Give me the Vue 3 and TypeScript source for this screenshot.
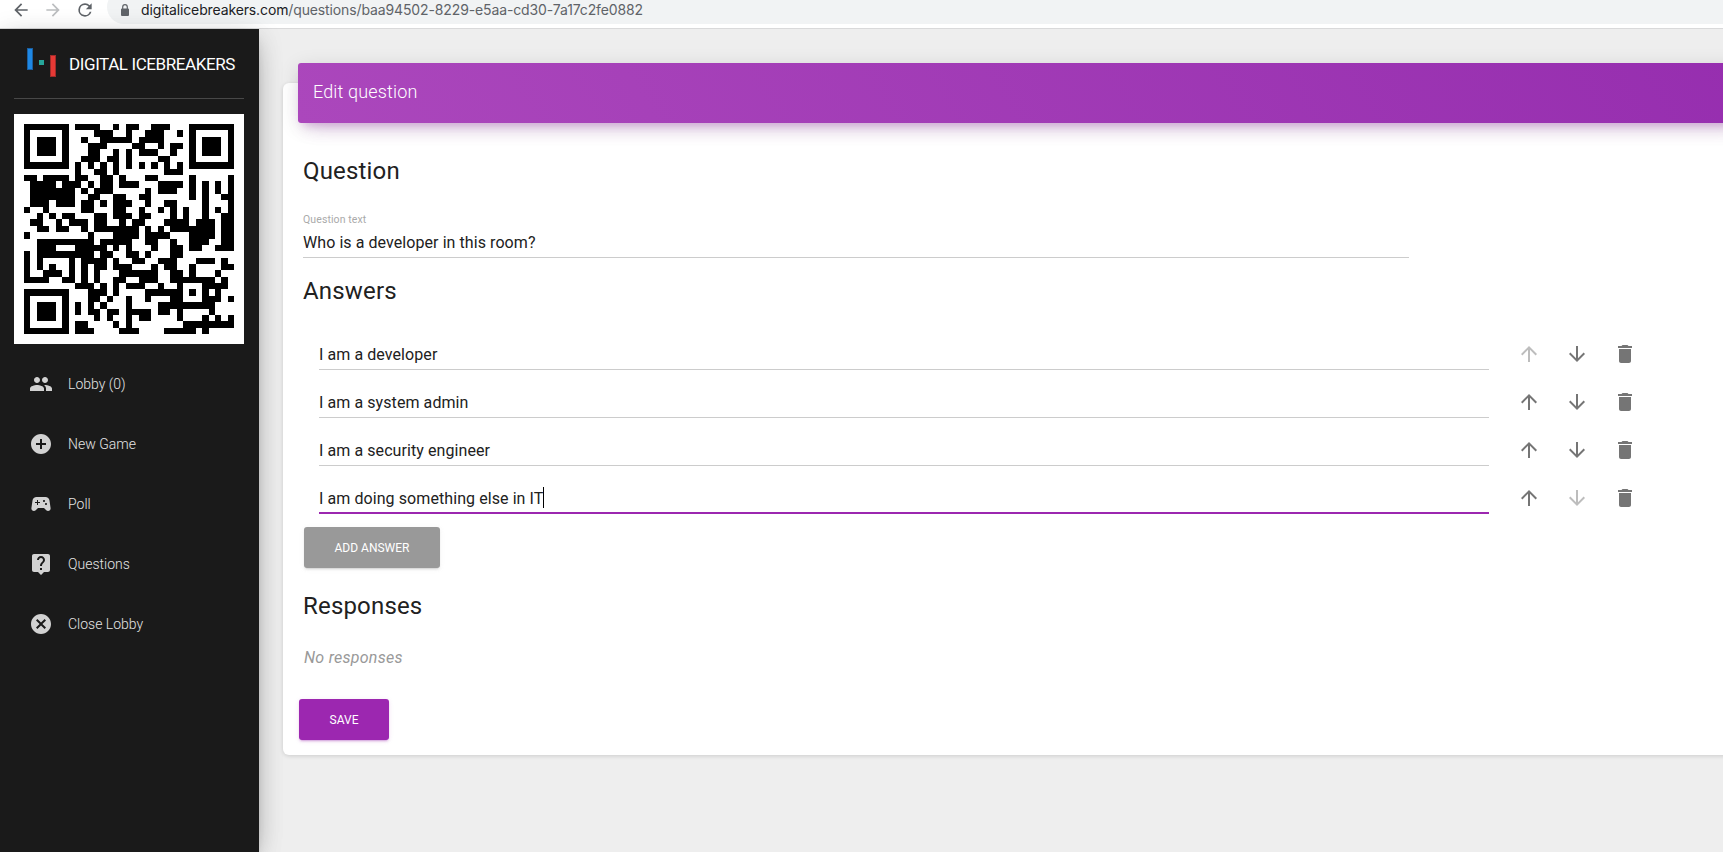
<script setup lang="ts">
const menu = [
  { label: 'Lobby (0)', d: 'M16 11c1.66 0 2.99-1.34 2.99-3S17.66 5 16 5s-3 1.34-3 3 1.34 3 3 3zm-8 0c1.66 0 2.99-1.34 2.99-3S9.66 5 8 5 5 6.34 5 8s1.34 3 3 3zm0 2c-2.33 0-7 1.17-7 3.5V19h14v-2.5C15 14.17 10.33 13 8 13zm8 0c-.29 0-.62.02-.97.05 1.16.84 1.97 1.97 1.97 3.45V19h6v-2.5c0-2.33-4.67-3.5-7-3.5z' },
  { label: 'New Game', d: 'M12 2C6.48 2 2 6.48 2 12s4.48 10 10 10 10-4.48 10-10S17.52 2 12 2zm5 11h-4v4h-2v-4H7v-2h4V7h2v4h4v2z' },
  { label: 'Poll', d: 'M21.58 16.09l-1.09-7.66C20.21 6.46 18.52 5 16.53 5H7.47C5.48 5 3.79 6.46 3.51 8.43l-1.09 7.66C2.2 17.63 3.39 19 4.94 19c.68 0 1.32-.27 1.8-.75L9 16h6l2.25 2.25c.48.48 1.13.75 1.8.75 1.56 0 2.75-1.37 2.53-2.91zM11 11H9v2H8v-2H6v-1h2V8h1v2h2v1zm4-1c-.55 0-1-.45-1-1s.45-1 1-1 1 .45 1 1-.45 1-1 1zm2 3c-.55 0-1-.45-1-1s.45-1 1-1 1 .45 1 1-.45 1-1 1z' },
  { label: 'Questions', d: 'M19 2H5c-1.11 0-2 .9-2 2v14c0 1.1.89 2 2 2h4l3 3 3-3h4c1.1 0 2-.9 2-2V4c0-1.1-.9-2-2-2zm-6 16h-2v-2h2v2zm2.07-7.75l-.9.92C13.45 11.9 13 12.5 13 14h-2v-.5c0-1.1.45-2.1 1.17-2.83l1.24-1.26c.37-.36.59-.86.59-1.41 0-1.1-.9-2-2-2s-2 .9-2 2H8c0-2.21 1.79-4 4-4s4 1.79 4 4c0 .88-.36 1.68-.93 2.25z' },
  { label: 'Close Lobby', d: 'M12 2C6.47 2 2 6.47 2 12s4.47 10 10 10 10-4.47 10-10S17.53 2 12 2zm5 13.59L15.59 17 12 13.41 8.41 17 7 15.59 10.59 12 7 8.41 8.41 7 12 10.59 15.59 7 17 8.41 13.41 12 17 15.59z' },
]
const up = 'M4 12l1.41 1.41L11 7.83V20h2V7.83l5.58 5.59L20 12l-8-8-8 8z'
const down = 'M20 12l-1.41-1.41L13 16.17V4h-2v12.17l-5.58-5.59L4 12l8 8 8-8z'
const bin = 'M6 19c0 1.1.9 2 2 2h8c1.1 0 2-.9 2-2V7H6v12zM19 4h-3.5l-1-1h-5l-1 1H5v2h14V4z'
const answers = ['I am a developer', 'I am a system admin', 'I am a security engineer', 'I am doing something else in IT']

// one string per module row, # = dark
const qr = [
  '#######.####..#.##..###...#######',
  '#.....#....###..#..###..#.#.....#',
  '#.###.#..#..#####.####....#.###.#',
  '#.###.#...###....##..#.##.#.###.#',
  '#.###.#...##..#.#.###..#..#.###.#',
  '#.....#..###.##.#....##...#.....#',
  '#######.#.#.#.#.#.#.#.#.#.#######',
  '........#..##.#.......###........',
  '##.####.##..##.#...##.....#.....#',
  '.####.###.#.##.###...####.#.#.#.#',
  '.#######.#.###.....#.###..#.#.#.#',
  '.#######..##..##..##......#.#..##',
  '.###.###.##.#.###..#..##....#...#',
  '#..#.....##...##..#..#.#.#..#.#.#',
  '..#.#.##...##.###.##...#.#..#..##',
  '.##..#.###.##..#.##...####.###.##',
  '..##.##..#.#######.#.#.#######.##',
  '#.........#...####.####...####.##',
  '..#########.#####..##..#..###..##',
  '..###...#####.#.#...#..##.##..###',
  '#.#########.##..##.#...##........',
  '#.#....#.####.#..##..###...###.#.',
  '#.#.#..#.#.##.###...#.##..#....##',
  '#..###.#.#.#...######..##.#...#..',
  '####..##.#.#..##..###..#######.#.',
  '........###.#.#.###..#..#...####.',
  '#######...###.#....######.#.#.#..',
  '#.....#...##.#..#..#...##...###.#',
  '#.###.#.#.#.#...#....#########...',
  '#.###.#.#.##.##.####.##.#....#...',
  '#.###.#....#.#..#.##....#...#.#.#',
  '#.....#.##....#.#........########',
  '#######.###....###....#####.#....',
]
const qrPath = qr.map((row, y) => [...row].map((c, x) => (c === '#' ? `M${x} ${y}h1v1h-1z` : '')).join('')).join('')
</script>

<template>
  <div class="window">
    <div class="toolbar">
      <svg class="nav" viewBox="0 0 24 24"><path d="M20 11H7.83l5.59-5.59L12 4l-8 8 8 8 1.41-1.41L7.83 13H20v-2z" /></svg>
      <svg class="nav off" viewBox="0 0 24 24"><path d="M12 4l-1.41 1.41L16.17 11H4v2h12.17l-5.58 5.59L12 20l8-8z" /></svg>
      <svg class="nav" viewBox="0 0 24 24"><path d="M17.65 6.35A7.958 7.958 0 0 0 12 4a8 8 0 1 0 7.73 10h-2.08A6 6 0 1 1 12 6c1.66 0 3.14.69 4.22 1.78L13 11h7V4l-2.35 2.35z" /></svg>
      <div class="address">
        <svg class="lock" viewBox="0 0 8 12"><path d="M0 5.5a1 1 0 0 1 1-1h6a1 1 0 0 1 1 1V11a1 1 0 0 1-1 1H1a1 1 0 0 1-1-1z" /><path d="M1.7 5V2.9a2.3 2.3 0 0 1 4.6 0V5" fill="none" stroke="#5f6368" stroke-width="1.2" /></svg>
        <span class="url"><b>digitalicebreakers.com</b>/questions/baa94502-8229-e5aa-cd30-7a17c2fe0882</span>
      </div>
    </div>
    <div class="page">
      <aside class="sidebar">
        <div class="brand">
          <svg class="logo" viewBox="0 0 30 30">
            <rect x=".5" y=".5" width="5" height="21" fill="#1e88e5" stroke="#1b5fa0" />
            <rect x="12" y="12" width="5" height="5" fill="#26a69a" />
            <rect x="23.5" y="7.5" width="5" height="21" fill="#e53935" stroke="#a02c2a" />
          </svg>
          <span>DIGITAL ICEBREAKERS</span>
        </div>
        <div class="code">
          <svg viewBox="0 0 33 33" shape-rendering="crispEdges"><path :d="qrPath" /></svg>
        </div>
        <nav>
          <a v-for="m in menu" :key="m.label" class="item">
            <svg viewBox="0 0 24 24"><path :d="m.d" /></svg><span>{{ m.label }}</span>
          </a>
        </nav>
      </aside>
      <main>
        <section class="card">
          <header>Edit question</header>
          <h3 class="first">Question</h3>
          <div class="field">
            <label>Question text</label>
            <div class="value">Who is a developer in this room?</div>
          </div>
          <h3 class="second">Answers</h3>
          <div class="answers">
            <div v-for="(a, i) in answers" :key="a" class="row">
              <div class="input" :class="{ focus: i === 3 }"><span>{{ a }}</span><i v-if="i === 3" class="caret" /></div>
              <svg viewBox="0 0 24 24" :class="{ disabled: i === 0 }"><path :d="up" /></svg>
              <svg viewBox="0 0 24 24" :class="{ disabled: i === 3 }"><path :d="down" /></svg>
              <svg viewBox="0 0 24 24"><path :d="bin" /></svg>
            </div>
          </div>
          <button class="add">ADD ANSWER</button>
          <h3 class="third">Responses</h3>
          <p class="none">No responses</p>
          <button class="save">SAVE</button>
        </section>
      </main>
    </div>
  </div>
</template>

<style>
body { margin: 0; overflow: hidden; }
</style>

<style scoped>
.window { width: 100vw; height: 100vh; overflow: hidden; display: flex; flex-direction: column; font-family: Roboto, sans-serif; color: #212121; }
.toolbar { height: 28px; flex: none; display: flex; background: #fff; border-bottom: 1px solid #d9d9da; overflow: hidden; }
.nav { width: 20px; height: 20px; flex: none; margin: 0 0 0 11px; fill: #5f6368; }
.nav + .nav { margin-left: 12px; }
.nav.off { fill: #bcbec0; }
.address { flex: 1; height: 34px; margin: -10px -20px 0 12px; border-radius: 17px; background: #f1f3f4; display: flex; align-items: center; padding: 6px 0 0 14px; box-sizing: border-box; }
.lock { width: 8px; height: 12px; fill: #5f6368; flex: none; margin-top: -1px; }
.url { font: 14px/20px Inter, sans-serif; letter-spacing: -.125px; color: #5f6368; margin-left: 12px; white-space: nowrap; }
.url b { font-weight: 400; color: #202124; }
.page { flex: 1; min-height: 0; display: flex; background: #eee; }
.sidebar { width: 259px; flex: none; box-sizing: border-box; padding: 0 15px 0 14px; background: #1a1a1a; box-shadow: 0 10px 30px -12px rgba(0,0,0,.42), 0 4px 25px rgba(0,0,0,.12), 0 8px 10px -5px rgba(0,0,0,.2); z-index: 1; }
.brand { height: 69px; display: flex; border-bottom: 1px solid #484848; color: #fff; font-size: 17px; line-height: 30px; letter-spacing: -.41px; white-space: nowrap; }
.logo { width: 30px; height: 30px; margin: 19px 12px 0 13px; }
.brand span { margin-top: 20px; }
.code { margin-top: 15px; height: 230px; background: #fff; padding: 10px; box-sizing: border-box; }
.code svg { display: block; width: 210px; height: 210px; }
nav { padding-top: 10px; }
.item { height: 60px; display: flex; align-items: center; padding-left: 15px; font-size: 14px; font-weight: 300; color: #e4e4e4; }
.item svg { width: 24px; height: 24px; fill: #d2d2d2; margin-right: 15px; }
main { flex: 1; min-width: 0; padding: 54px 0 0 24px; }
.card { width: 1480px; height: 672px; box-sizing: border-box; padding: 0 15px 0 20px; border-radius: 6px; background: #fff; box-shadow: 0 1px 4px rgba(0,0,0,.14); display: flow-root; }
header { position: relative; top: -20px; height: 60px; margin: 0 0 0 -5px; box-sizing: border-box; padding: 15px; border-radius: 3px; color: #fff; font-size: 18px; line-height: 28px; letter-spacing: .15px; font-weight: 300; background: linear-gradient(60deg, #ab47bc, #8e24aa 140%); box-shadow: 0 12px 20px -10px rgba(156,39,176,.28), 0 4px 20px rgba(0,0,0,.12), 0 7px 8px -5px rgba(156,39,176,.2); }
h3 { margin: 0; font-size: 24px; line-height: 30px; font-weight: 400; letter-spacing: .18px; }
.first { margin-top: 13px; }
.field { width: 1106px; margin-top: 27px; border-bottom: 1px solid #ccc; }
label { display: block; font-size: 10.5px; line-height: 14px; letter-spacing: .1px; color: #aaa; }
.value { margin-top: 6px; height: 24px; font-size: 16px; line-height: 19px; letter-spacing: .07px; }
.second { margin-top: 18px; }
.answers { margin: 24px 0 0 16px; }
.row { height: 48px; display: flex; align-items: center; }
.row svg { width: 24px; height: 24px; margin-right: 24px; fill: #757575; }
.row svg.disabled { fill: #bdbdbd; }
.input { align-self: flex-start; width: 1170px; height: 31px; margin: 9px 28px 0 0; box-sizing: border-box; display: flex; align-items: flex-start; padding-top: 6px; border-bottom: 1px solid #ccc; font-size: 16px; line-height: 19px; letter-spacing: .08px; }
.input.focus { border-bottom: 2px solid #9c27b0; }
.caret { width: 1px; height: 21px; margin-top: -2px; background: #000; }
button { display: block; height: 41px; border: 0; border-radius: 3px; color: #fff; font: 400 12px/17px Roboto, sans-serif; padding: 2px 0 0; }
.add { width: 136px; margin: 5px 0 0 1px; background: #999; box-shadow: 0 2px 2px rgba(153,153,153,.14), 0 3px 1px -2px rgba(153,153,153,.2), 0 1px 5px rgba(153,153,153,.12); }
.third { margin-top: 23px; }
.none { margin: 26px 0 0 1px; font-size: 16px; line-height: 21px; letter-spacing: .26px; font-style: italic; color: #999; }
.save { width: 90px; margin: 31px 0 0 -4px; background: #9c27b0; box-shadow: 0 2px 2px rgba(156,39,176,.14), 0 3px 1px -2px rgba(156,39,176,.2), 0 1px 5px rgba(156,39,176,.12); }
</style>
